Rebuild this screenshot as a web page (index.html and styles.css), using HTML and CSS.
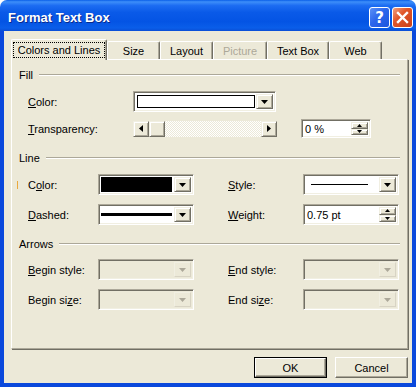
FILE: index.html
```html
<!DOCTYPE html>
<html>
<head>
<meta charset="utf-8">
<title>Format Text Box</title>
<link rel="stylesheet" href="styles.css">
</head>
<body>
<div class="window">
  <div class="titlebar">
    <div class="title">Format Text Box</div>
    <div class="tbtn help">?</div>
    <div class="tbtn close">
      <svg width="13" height="13" viewBox="0 0 13 13"><path d="M2 2 L11 11 M11 2 L2 11" stroke="#fff" stroke-width="2.4" stroke-linecap="square"/></svg>
    </div>
  </div>
  <div class="client">
    <div class="tabs">
      <div class="tab active w-colors"><span class="focus">Colors and Lines</span></div>
      <div class="tab w-size">Size</div>
      <div class="tab w-layout">Layout</div>
      <div class="tab w-picture disabled">Picture</div>
      <div class="tab w-textbox">Text Box</div>
      <div class="tab w-web">Web</div>
    </div>
    <div class="panel">
      <div class="hdr first"><span>Fill</span><div class="rule"></div></div>
      <div class="row">
        <span class="lbl lbl-wide"><u>C</u>olor:</span>
        <div class="combo combo-wide">
          <div class="field"><div class="swatch-white"></div></div>
          <div class="dd"><svg width="7" height="4" viewBox="0 0 7 4"><polygon points="0,0 7,0 3.5,4" fill="#000"/></svg></div>
        </div>
      </div>
      <div class="row tr">
        <span class="lbl lbl-wide"><u>T</u>ransparency:</span>
        <div class="scroll">
          <div class="sbtn"><svg width="4" height="7" viewBox="0 0 4 7"><polygon points="4,0 4,7 0,3.5" fill="#000"/></svg></div>
          <div class="sbtn thumb"></div>
          <div class="track"></div>
          <div class="sbtn"><svg width="4" height="7" viewBox="0 0 4 7"><polygon points="0,0 0,7 4,3.5" fill="#000"/></svg></div>
        </div>
        <div class="spin spin-pct">
          <span class="val">0 %</span>
          <div class="spbtns">
            <div class="spb"><svg width="5" height="3" viewBox="0 0 5 3"><polygon points="0,3 5,3 2.5,0" fill="#000"/></svg></div>
            <div class="spb"><svg width="5" height="3" viewBox="0 0 5 3"><polygon points="0,0 5,0 2.5,3" fill="#000"/></svg></div>
          </div>
        </div>
      </div>

      <div class="hdr"><span>Line</span><div class="rule"></div></div>
      <div class="row caret-row">
        <span class="caret"></span>
        <span class="lbl lbl-a">C<u>o</u>lor:</span>
        <div class="combo combo-n">
          <div class="field"><div class="swatch-black"></div></div>
          <div class="dd"><svg width="7" height="4" viewBox="0 0 7 4"><polygon points="0,0 7,0 3.5,4" fill="#000"/></svg></div>
        </div>
        <span class="lbl lbl-b"><u>S</u>tyle:</span>
        <div class="combo combo-n">
          <div class="field"><div class="thin-line"></div></div>
          <div class="dd"><svg width="7" height="4" viewBox="0 0 7 4"><polygon points="0,0 7,0 3.5,4" fill="#000"/></svg></div>
        </div>
      </div>
      <div class="row">
        <span class="lbl lbl-a"><u>D</u>ashed:</span>
        <div class="combo combo-n">
          <div class="field"><div class="thick-line"></div></div>
          <div class="dd"><svg width="7" height="4" viewBox="0 0 7 4"><polygon points="0,0 7,0 3.5,4" fill="#000"/></svg></div>
        </div>
        <span class="lbl lbl-b"><u>W</u>eight:</span>
        <div class="spin spin-w">
          <span class="val">0.75 pt</span>
          <div class="spbtns">
            <div class="spb"><svg width="5" height="3" viewBox="0 0 5 3"><polygon points="0,3 5,3 2.5,0" fill="#000"/></svg></div>
            <div class="spb"><svg width="5" height="3" viewBox="0 0 5 3"><polygon points="0,0 5,0 2.5,3" fill="#000"/></svg></div>
          </div>
        </div>
      </div>

      <div class="hdr arrows"><span>Arrows</span><div class="rule"></div></div>
      <div class="row after-arrows">
        <span class="lbl lbl-a"><u>B</u>egin style:</span>
        <div class="combo combo-n off">
          <div class="field"></div>
          <div class="dd"><svg width="7" height="4" viewBox="0 0 7 4"><polygon points="0,0 7,0 3.5,4" fill="#aca899"/></svg></div>
        </div>
        <span class="lbl lbl-b"><u>E</u>nd style:</span>
        <div class="combo combo-n off">
          <div class="field"></div>
          <div class="dd"><svg width="7" height="4" viewBox="0 0 7 4"><polygon points="0,0 7,0 3.5,4" fill="#aca899"/></svg></div>
        </div>
      </div>
      <div class="row">
        <span class="lbl lbl-a">Begin si<u>z</u>e:</span>
        <div class="combo combo-n off">
          <div class="field"></div>
          <div class="dd"><svg width="7" height="4" viewBox="0 0 7 4"><polygon points="0,0 7,0 3.5,4" fill="#aca899"/></svg></div>
        </div>
        <span class="lbl lbl-b">End si<u>z</u>e:</span>
        <div class="combo combo-n off">
          <div class="field"></div>
          <div class="dd"><svg width="7" height="4" viewBox="0 0 7 4"><polygon points="0,0 7,0 3.5,4" fill="#aca899"/></svg></div>
        </div>
      </div>
    </div>
    <div class="buttons">
      <div class="btn default"><div class="btn-in">OK</div></div>
      <div class="btn"><div class="btn-in">Cancel</div></div>
    </div>
  </div>
</div>
</body>
</html>
```
FILE: styles.css
```css
* { box-sizing: border-box; }
body {
  margin: 0;
  background: #fff;
  font-family: "Liberation Sans", Arial, sans-serif;
  font-size: 11px;
  color: #000;
}
u { text-decoration: underline; text-underline-offset: 1px; }

.window {
  width: 416px;
  height: 387px;
  display: flex;
  flex-direction: column;
}

.titlebar {
  height: 31px;
  flex: none;
  border-radius: 7px 7px 0 0;
  background: linear-gradient(to bottom, #0a5fe8 0%, #3d8ef9 6%, #1c6cf2 18%, #0a5ae8 40%, #0454e4 70%, #0a5ee9 90%, #0a4ed6 100%);
  display: flex;
  align-items: center;
  padding: 4px 3px 0 8px;
}
.title {
  flex: 1;
  color: #fff;
  font-weight: bold;
  font-size: 13px;
  text-shadow: 1px 1px 0 #0a2b8c;
}
.tbtn {
  width: 21px;
  height: 21px;
  border: 1px solid #fff;
  border-radius: 3px;
  display: flex;
  align-items: center;
  justify-content: center;
  color: #fff;
}
.help {
  background: linear-gradient(135deg, #5b91f6 0%, #2c66ec 45%, #1e55de 100%);
  font-family: "DejaVu Sans", sans-serif;
  font-weight: bold;
  font-size: 15px;
  margin-right: 2px;
}
.close {
  background: linear-gradient(135deg, #f1a080 0%, #e0562a 40%, #c9411c 100%);
}

.client {
  flex: 1;
  background: #ece9d8;
  border: 4px solid #0a48dc;
  border-top: 0;
  padding: 8px 3px 0 7px;
  display: flex;
  flex-direction: column;
}

.tabs {
  height: 20px;
  display: flex;
  align-items: flex-end;
}
.tab {
  height: 18px;
  background: #ece9d8;
  border-top: 1px solid #fff;
  border-left: 1px solid #fff;
  border-right: 1px solid #716f64;
  box-shadow: inset -1px 0 0 #aca899;
  border-radius: 2px 2px 0 0;
  display: flex;
  align-items: center;
  justify-content: center;
}
.tab.active {
  height: 21px;
  margin-bottom: -1px;
  position: relative;
  z-index: 1;
}
.tab.disabled { color: #aca899; }
.focus {
  border: 1px dotted #000;
  line-height: 14px;
  padding: 0 4px;
}
.w-colors { width: 96px; }
.w-size { width: 53px; }
.w-layout { width: 53px; }
.w-picture { width: 54px; }
.w-textbox { width: 62px; }
.w-web { width: 53px; }

.panel {
  height: 290px;
  border-top: 1px solid #fff;
  border-left: 1px solid #fff;
  border-right: 1px solid #aca899;
  border-bottom: 1px solid #aca899;
  box-shadow: 1px 1px 0 #716f64;
  margin-right: 1px;
}

.hdr {
  height: 14px;
  margin-top: 13px;
  padding: 0 7px;
  display: flex;
  align-items: center;
}
.hdr.first { margin-top: 8px; }
.hdr.arrows { margin-top: 12px; }
.rule {
  flex: 1;
  margin-left: 6px;
  height: 2px;
  border-top: 1px solid #aca899;
  border-bottom: 1px solid #fff;
}

.row {
  margin-top: 9px;
  height: 21px;
  padding-left: 16px;
  display: flex;
  align-items: center;
}
.row.tr { margin-top: 7px; height: 19px; }
.row.after-arrows { margin-top: 8px; }
.row.caret-row { padding-left: 5px; }
.caret {
  width: 1px;
  height: 8px;
  background: #eaa93e;
  margin-right: 10px;
}

.lbl-wide { width: 105px; }
.lbl-a { width: 70px; }
.lbl-b { width: 75px; margin-left: 34px; }

.combo {
  height: 21px;
  display: flex;
  padding: 2px;
  background: #fff;
  border: 1px solid;
  border-color: #aca899 #fff #fff #aca899;
  box-shadow: inset 1px 1px 0 #716f64, inset -1px -1px 0 #f1efe2;
}
.combo-wide { width: 143px; }
.combo-n { width: 96px; }
.combo.off { background: #ece9d8; }
.field {
  flex: 1;
  display: flex;
  align-items: center;
  padding: 1px 1px 1px 0;
}
.swatch-white {
  flex: 1;
  align-self: stretch;
  border: 1px solid #000;
  background: #fff;
  margin-left: 1px;
}
.swatch-black {
  flex: 1;
  align-self: stretch;
  background: #000;
  margin: -1px 1px -1px 0;
}
.thin-line {
  flex: 1;
  height: 1px;
  background: #000;
  margin: 0 10px 0 5px;
}
.thick-line {
  flex: 1;
  height: 3px;
  background: #000;
  margin-right: 1px;
}

.dd, .sbtn, .spb {
  background: #ece9d8;
  border: 1px solid;
  border-color: #f1efe2 #716f64 #716f64 #f1efe2;
  box-shadow: inset 1px 1px 0 #fff, inset -1px -1px 0 #aca899;
  display: flex;
  align-items: center;
  justify-content: center;
}
.dd { width: 17px; }
.combo.off .dd {
  border-color: #f1efe2 #d8d4c4 #d8d4c4 #f1efe2;
  box-shadow: none;
}

.scroll {
  width: 144px;
  height: 16px;
  display: flex;
  margin-right: 24px;
}
.sbtn { width: 16px; height: 16px; }
.track {
  flex: 1;
  background-color: #ece9d8;
  background-image: repeating-conic-gradient(#fff 0 25%, #ece9d8 0 50%);
  background-size: 2px 2px;
}

.spin {
  display: flex;
  align-items: center;
  padding: 2px 2px 2px 2px;
  background: #fff;
  border: 1px solid;
  border-color: #aca899 #fff #fff #aca899;
  box-shadow: inset 1px 1px 0 #716f64, inset -1px -1px 0 #f1efe2;
}
.spin-pct { width: 70px; height: 19px; }
.spin-w { width: 96px; height: 21px; }
.spin .val { flex: 1; padding-left: 1px; }
.spbtns {
  width: 17px;
  align-self: stretch;
  display: flex;
  flex-direction: column;
}
.spb { flex: 1; }

.buttons {
  margin-top: 8px;
  display: flex;
  justify-content: flex-end;
  gap: 8px;
  padding-right: 1px;
}
.btn {
  width: 73px;
  height: 21px;
  border: 1px solid;
  border-color: #fff #716f64 #716f64 #fff;
  box-shadow: inset -1px -1px 0 #aca899;
  display: flex;
}
.btn.default {
  border: 1px solid #000;
  box-shadow: none;
}
.btn-in {
  flex: 1;
  display: flex;
  align-items: center;
  justify-content: center;
}
.btn.default .btn-in {
  border: 1px solid;
  border-color: #fff #716f64 #716f64 #fff;
  box-shadow: inset -1px -1px 0 #aca899;
}
```
